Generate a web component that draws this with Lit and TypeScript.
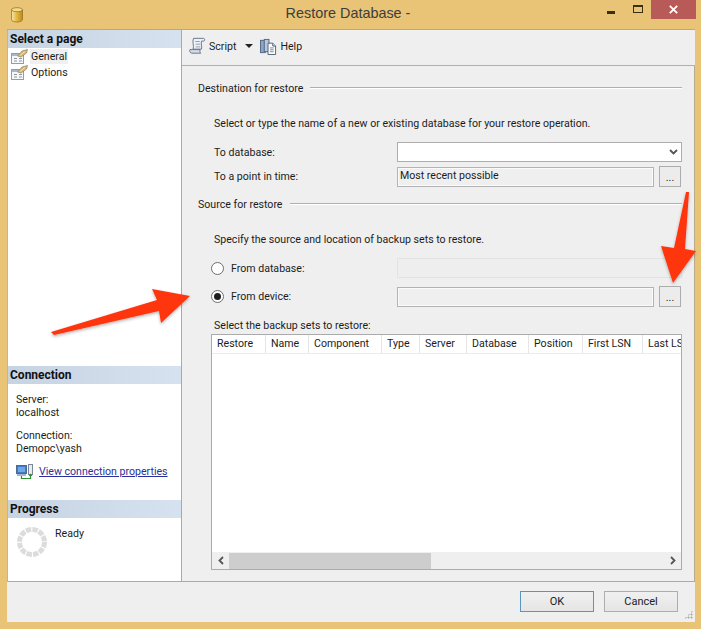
import { LitElement, html, css, svg } from "lit";
import { customElement } from "lit/decorators.js";

const pageIcon = html`<svg class="pg" width="17" height="15" viewBox="0 0 17 15">
  <rect x="0.500" y="4.500" width="12" height="10" fill="#f6f7fa" stroke="#939cab"/>
  <rect x="1" y="5" width="11" height="2" fill="#aab8cc"/>
  <path d="M3 9.500h3M3 12h3M8 9.500h3M8 12h3" stroke="#8b95a3"/>
  <path d="M6.500 7 L11 2 L16.500 .5 L15.500 4 L10 8 Z" fill="#d9bb78" stroke="#8f8060" stroke-width=".7"/>
  <path d="M9 6.500L14 2.500" stroke="#f3e5bd" stroke-width=".8"/>
</svg>`;

const scriptIcon = html`<svg width="18" height="18" viewBox="0 0 20 20">
  <path d="M5 1.500h11c1.600 0 2 2.500.5 3H14c-1.400 2.500 1 6-.2 9H4.500C6 10 3.200 5 5 1.500Z" fill="#eef1f5" stroke="#5c6f86"/>
  <path d="M1 14h11.500c-.6 1.200-.6 3 .6 4H3c-1.600 0-2.700-2.500-2-4Z" fill="#d5dce6" stroke="#5c6f86"/>
  <path d="M7 5h5M7.500 8h5M7.500 11h5" stroke="#8a98ab"/>
</svg>`;

const helpIcon = html`<svg width="17" height="17" viewBox="0 0 18 18">
  <rect x="0.500" y="2.500" width="5" height="13" fill="#8ea4c2" stroke="#4f6686"/>
  <rect x="4.500" y="1.500" width="5" height="13" fill="#b9c8dc" stroke="#4f6686"/>
  <path d="M8.500 5.500h5l3 3v9h-8Z" fill="#fdfdfe" stroke="#4f5f75"/>
  <path d="M13.500 5.500v3h3" fill="#dfe5ee" stroke="#4f5f75"/>
  <path d="M10.500 10.500h4M10.500 12.500h4M10.500 14.500h4" stroke="#7a8798"/>
</svg>`;

const connIcon = html`<svg width="18" height="17" viewBox="0 0 18 17">
  <rect x="0.500" y="2.500" width="10" height="8" fill="#3f79c9" stroke="#4e6a92"/>
  <rect x="2" y="4" width="7" height="5" fill="#6ea6e6"/>
  <rect x="1" y="11" width="9" height="2" fill="#a9b4c6"/>
  <rect x="12.500" y="1.500" width="4" height="10" fill="#e8ebf0" stroke="#7b8798"/>
  <path d="M5.500 13v2.500h9V12" fill="none" stroke="#2f8f2f" stroke-width="1.200"/>
  <path d="M12.500 13l2-2.500 2 2.500Z" fill="#2f8f2f"/>
</svg>`;

const spinner = html`<svg width="32" height="32" viewBox="-16 -16 32 32">
  <circle r="12.500" fill="none" stroke="#dcdcdc" stroke-width="5" stroke-dasharray="5.400 1.145"/>
</svg>`;

const chevDown = svg`<path d="M1 1l3.500 3.500L8 1" fill="none" stroke="#555" stroke-width="1.800"/>`;

const columns: [string, number][] = [
  ["Restore", 54], ["Name", 43], ["Component", 73], ["Type", 38], ["Server", 47],
  ["Database", 62], ["Position", 54], ["First LSN", 60], ["Last LSN", 60],
];

@customElement("app-root")
export class AppRoot extends LitElement {
  static styles = css`
    :host {
      display: block; position: relative; width: 701px; height: 629px; overflow: hidden;
      background: #e9c376; color: #1c1c1c;
      font-family: Roboto, "Liberation Sans", Arial, sans-serif; font-size: 10.600px;
      box-sizing: border-box;
    }
    * { box-sizing: border-box; }
    .titlebar { height: 29px; display: flex; align-items: center; position: relative; padding-left: 10px; }
    .title { position: absolute; left: 0; right: 5px; top: 5px; text-align: center; font-family: "Liberation Sans", Arial, sans-serif; font-size: 14.400px; color: #3d3d3d; }
    .winbtns { position: absolute; right: 5px; top: 0; display: flex; align-items: flex-start; }
    .min { width: 8px; height: 3px; background: #3b2f12; margin: 11px 18px 0 0; }
    .max { width: 10px; height: 8px; border: 1.500px solid #3b2f12; border-top-width: 2.500px; margin: 5px 8px 0 0; }
    .close { width: 45px; height: 19px; background: #b85a57; color: #fff; display: flex; align-items: center; justify-content: center; }

    .client { margin: 0 6px 0 7px; height: 593px; background: #efefef; display: grid; grid-template-columns: 175px 1fr; grid-template-rows: 1fr 40px; border-top: 1px solid #b3a98f; }
    .side { background: #fff; border-right: 1px solid #a9a9a9; border-bottom: 1px solid #a9a9a9; display: flex; flex-direction: column; border-left: 1px solid #b5b5b5; }
    .sidehead { height: 18px; background: linear-gradient(90deg, #c6d3e2, #d6e2f0); font-weight: bold; font-size: 12px; color: #111; display: flex; align-items: center; padding-left: 2px; flex: none; }
    .pages { flex: 1; }
    .pagerow { height: 16px; display: flex; align-items: center; gap: 2px; padding-left: 3px; }
    .pagerow span { padding: 0 1px; line-height: 15px; }
    .pagerow .sel { background: #f0f0f0; }
    .conn { height: 116px; padding: 9px 0 0 8px; line-height: 13px; flex: none; }
    .conn p { margin: 0 0 10px; }
    .connlink { display: flex; align-items: center; gap: 5px; color: #2a2f9a; text-decoration: underline; margin-top: -2px; }
    .prog { height: 63px; display: flex; gap: 7px; padding: 8px 0 0 8px; flex: none; }
    .prog span { padding-top: 1px; }
    .bottombar { grid-column: 1 / 3; display: flex; justify-content: flex-end; gap: 10px; padding: 9px 17px 0 0; position: relative; }
    .wbtn { width: 74px; height: 21px; background: linear-gradient(#f0f0f0, #e5e5e5); border: 1px solid #adadad; display: flex; align-items: center; justify-content: center; font-size: 11px; color: #222; }
    .wbtn.def { border-color: #5a94c0; }
    .grip { position: absolute; right: 2px; bottom: 3px; width: 9px; height: 9px; background-image: radial-gradient(#a9a9a9 45%, transparent 50%); background-size: 3px 3px; clip-path: polygon(100% 0, 100% 100%, 0 100%); }

    .main { display: flex; flex-direction: column; min-width: 0; }
    .toolbar { height: 36px; flex: none; border-bottom: 1px solid #b0b0b0; display: flex; align-items: center; padding: 0 0 3px 7px; }
    .tbitem { display: flex; align-items: center; gap: 2px; }
    .tbitem.help { gap: 3px; }
    .caret { width: 0; height: 0; border: 4px solid transparent; border-top: 4px solid #222; border-bottom: 0; margin: 0 7px 0 9px; }
    .form { flex: 1; border-bottom: 1px solid #a9a9a9; padding: 0 12px 0 16px; display: flex; flex-direction: column; border-right: 1px solid #b8ab8a; }
    .legend { display: flex; align-items: center; gap: 7px; height: 16px; }
    .legend::after { content: ""; flex: 1; height: 2px; background: linear-gradient(#b0b0b0 50%, #fff 50%); }
    .hint { height: 16px; display: flex; align-items: center; padding-left: 16px; }
    .row { display: grid; grid-template-columns: 183px 1fr 28px; height: 20px; align-items: center; padding-left: 16px; }
    .row.radio { grid-template-columns: 186px 1fr 28px; padding-left: 13px; }
    .radlabel { display: flex; align-items: center; gap: 7px; }
    .rad { width: 13px; height: 13px; border-radius: 50%; border: 1px solid #6e6e6e; background: #fff; display: flex; align-items: center; justify-content: center; flex: none; }
    .rad.on::after { content: ""; width: 7px; height: 7px; border-radius: 50%; background: #1d1d1d; }
    .input { height: 20px; border: 1px solid #b3b3b3; background: #efefef; padding: 0 2px 2px; display: flex; align-items: center; }
    .input.inset { box-shadow: inset 0 0 0 1px #fafafa; }
    .input.white { background: #fff; border-color: #adadad; grid-column: 2 / 4; justify-content: flex-end; padding: 0 3px 0 2px; }
    .input.flat { border-color: #e2e2e2; background: #eeeeee; grid-column: 2 / 4; }
    .dots { width: 22px; height: 21px; justify-self: end; margin-right: 1px; border: 1px solid #adadad; background: #ececec; display: flex; align-items: flex-end; justify-content: center; line-height: 15px; padding-bottom: 1px; }
    .tblabel { height: 14px; display: flex; align-items: center; padding-left: 16px; }
    .table { width: 471px; height: 236px; margin: 2px 0 0 13px; border: 1px solid #ababab; background: #fff; display: flex; flex-direction: column; overflow: hidden; flex: none; }
    .thead { height: 19px; display: flex; flex: none; border-bottom: 1px solid #ececec; overflow: hidden; }
    .th { flex: none; height: 18px; padding: 0 0 1px 5px; border-right: 1px solid #e5e5e5; display: flex; align-items: center; white-space: nowrap; overflow: hidden; }
    .tbody { flex: 1; }
    .scroll { height: 17px; flex: none; background: #efefef; display: flex; align-items: center; position: relative; }
    .sarrow { width: 17px; height: 17px; display: flex; align-items: center; justify-content: center; flex: none; }
    .thumb { width: 202px; height: 16px; background: #cdcdcd; flex: none; }
    .spacer { flex: 1; }
    .arrows { position: absolute; left: 0; top: 0; pointer-events: none; }
  `;

  render() {
    return html`
      <div class="titlebar">
        <svg width="14" height="16" viewBox="0 0 14 16">
          <defs><linearGradient id="g" x1="0" x2="1" y1="0" y2="0"><stop offset="0" stop-color="#f7e6a8"/><stop offset=".5" stop-color="#e2b53a"/><stop offset="1" stop-color="#b98a1e"/></linearGradient></defs>
          <path d="M1.500 2.500v10c0 1.500 2.500 2.500 5.500 2.500s5.500-1 5.500-2.500v-10Z" fill="url(#g)" stroke="#8f6f20" stroke-width=".7"/>
          <ellipse cx="7" cy="2.700" rx="5.500" ry="2" fill="#f3dc8c" stroke="#8f6f20" stroke-width=".7"/>
        </svg>
        <div class="title">Restore Database -</div>
        <div class="winbtns">
          <div class="min"></div><div class="max"></div>
          <div class="close"><svg width="9" height="9" viewBox="0 0 9 9"><path d="M.8.800l7.400 7.400M8.200.800L.8 8.200" stroke="#fff" stroke-width="1.800"/></svg></div>
        </div>
      </div>
      <div class="client">
        <div class="side">
          <div class="sidehead">Select a page</div>
          <div class="pages">
            <div class="pagerow">${pageIcon}<span class="sel">General</span></div>
            <div class="pagerow">${pageIcon}<span>Options</span></div>
          </div>
          <div class="sidehead">Connection</div>
          <div class="conn">
            <p>Server:<br />localhost</p>
            <p>Connection:<br />Demopc\\yash</p>
            <div class="connlink">${connIcon}<span>View connection properties</span></div>
          </div>
          <div class="sidehead">Progress</div>
          <div class="prog">${spinner}<span>Ready</span></div>
        </div>
        <div class="main">
          <div class="toolbar">
            <div class="tbitem">${scriptIcon}<span>Script</span></div>
            <div class="caret"></div>
            <div class="tbitem help">${helpIcon}<span>Help</span></div>
          </div>
          <div class="form">
            <div class="legend" style="margin-top:14px">Destination for restore</div>
            <div class="hint" style="margin-top:19px">Select or type the name of a new or existing database for your restore operation.</div>
            <div class="row" style="margin-top:11px"><span>To database:</span><div class="input white"><svg width="9" height="6" viewBox="0 0 9 6">${chevDown}</svg></div></div>
            <div class="row" style="margin-top:4px"><span>To a point in time:</span><div class="input inset">Most recent possible</div><div class="dots">...</div></div>
            <div class="legend" style="margin-top:10px">Source for restore</div>
            <div class="hint" style="margin-top:19px">Specify the source and location of backup sets to restore.</div>
            <div class="row radio" style="margin-top:11px"><div class="radlabel"><span class="rad"></span><span>From database:</span></div><div class="input flat"></div></div>
            <div class="row radio" style="margin-top:8px"><div class="radlabel"><span class="rad on"></span><span>From device:</span></div><div class="input inset"></div><div class="dots">...</div></div>
            <div class="tblabel" style="margin-top:12px">Select the backup sets to restore:</div>
            <div class="table">
              <div class="thead">${columns.map(([n, w]) => html`<div class="th" style="width:${w}px">${n}</div>`)}</div>
              <div class="tbody"></div>
              <div class="scroll">
                <div class="sarrow"><svg width="6" height="9" viewBox="0 0 6 9"><path d="M5 1L1.500 4.500 5 8" fill="none" stroke="#555" stroke-width="1.800"/></svg></div>
                <div class="thumb"></div>
                <div class="spacer"></div>
                <div class="sarrow"><svg width="6" height="9" viewBox="0 0 6 9"><path d="M1 1l3.500 3.500L1 8" fill="none" stroke="#555" stroke-width="1.800"/></svg></div>
              </div>
            </div>
          </div>
        </div>
        <div class="bottombar">
          <div class="wbtn def">OK</div>
          <div class="wbtn">Cancel</div>
          <div class="grip"></div>
        </div>
      </div>
      <svg class="arrows" width="701" height="629" viewBox="0 0 701 629">
        <defs><filter id="s" x="-20%" y="-20%" width="140%" height="140%"><feDropShadow dx="0" dy="1.500" stdDeviation="1.500" flood-color="#000" flood-opacity=".3"/></filter></defs>
        <path d="M51 332 L157 300 L152 289 L190 296 L161 323 L159 311 L54 335 Z" fill="#ff3410" filter="url(#s)"/>
        <path d="M686 192 L689 192 L685 249 L696 251 L673 283 L661 246 L674 248 Z" fill="#ff3410" filter="url(#s)"/>
      </svg>
    `;
  }
}
